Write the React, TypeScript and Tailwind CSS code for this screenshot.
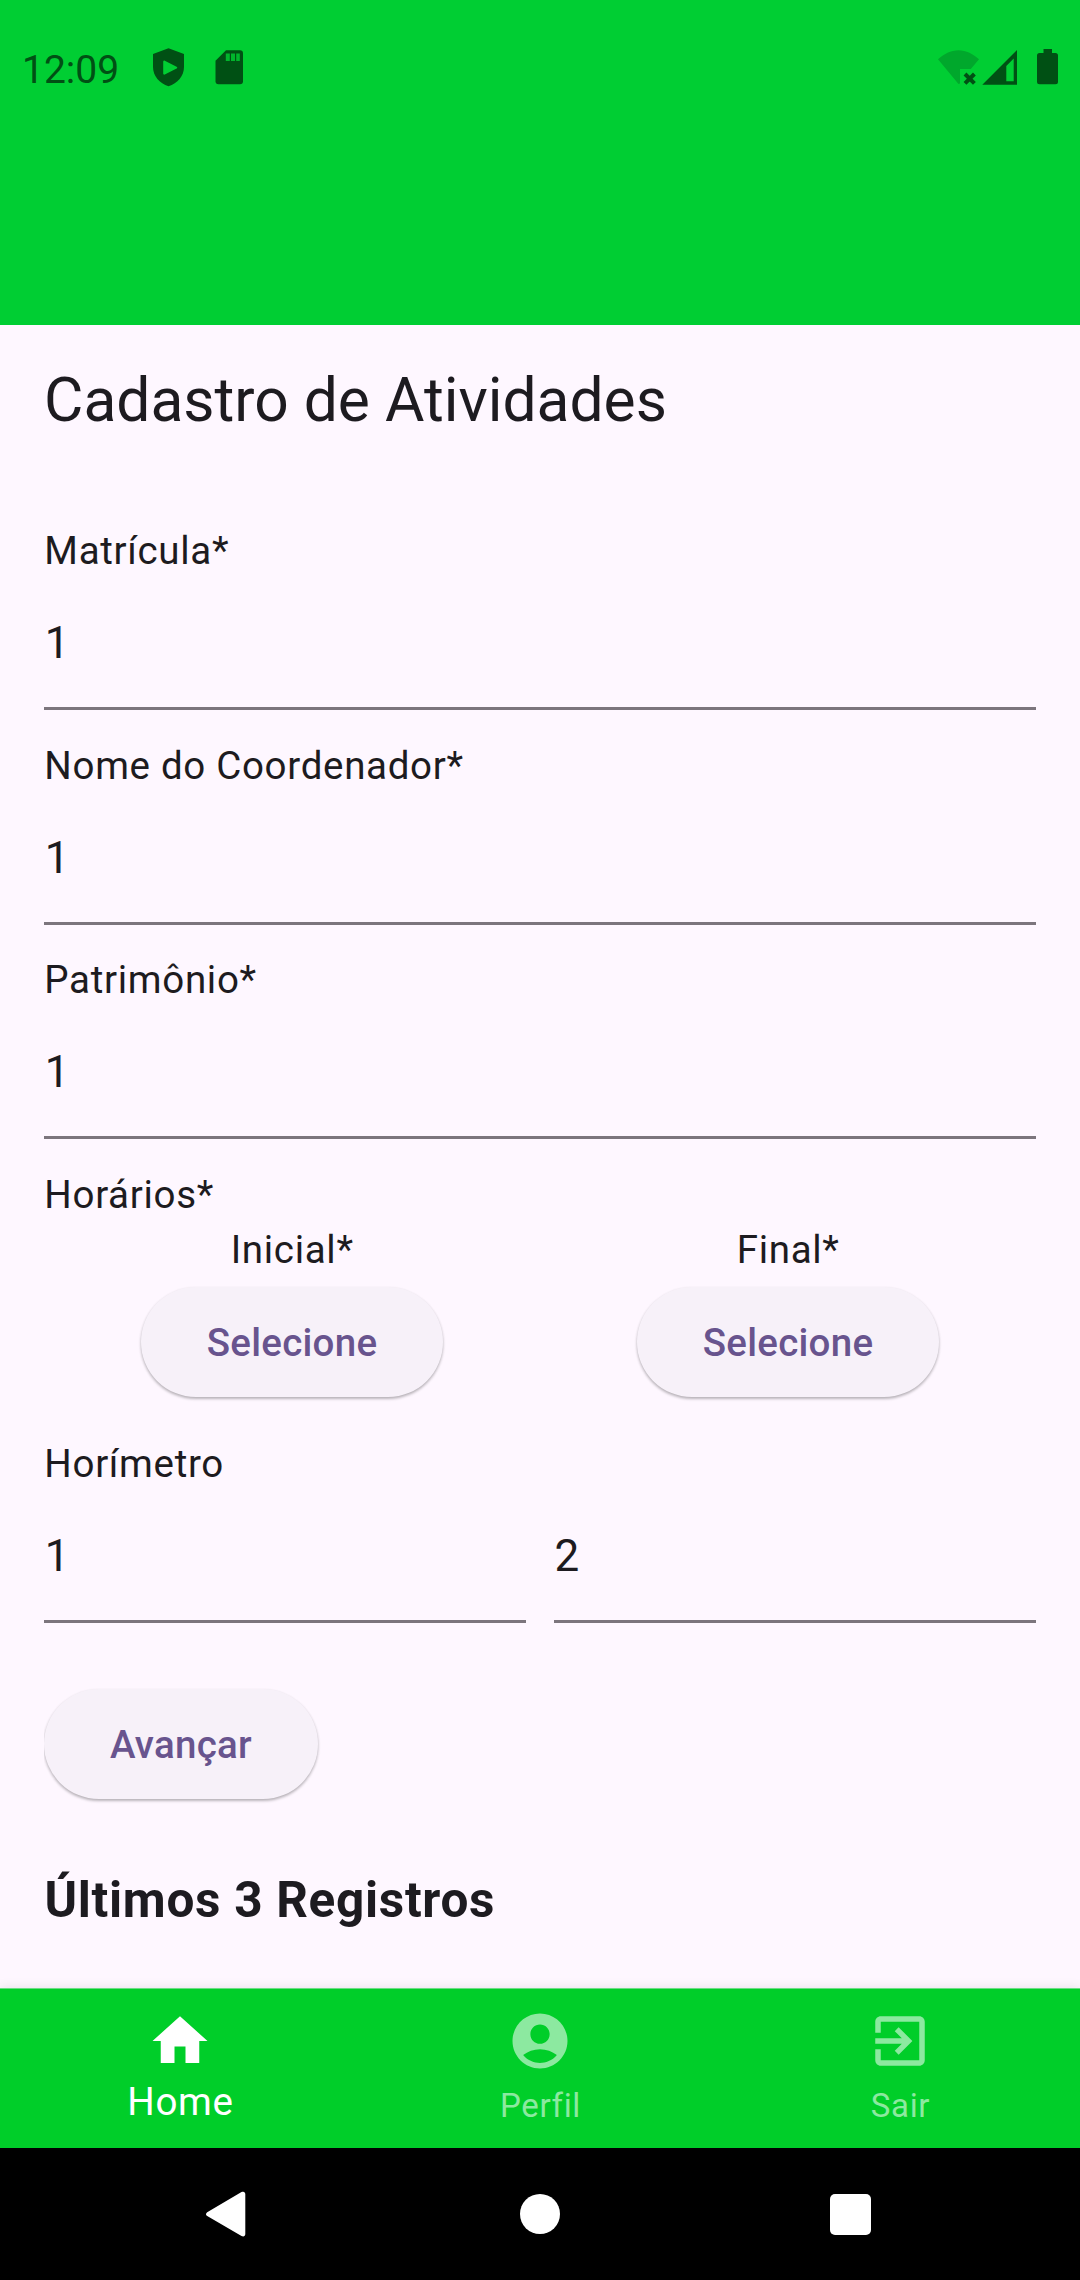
import type { ReactNode } from 'react';

const FONT = "font-['Roboto','Noto_Sans',sans-serif]";

function StatusBar() {
  return (
    <div className="flex h-[138px] items-center justify-between">
      <div className="flex items-center pl-[22px]">
        <span className="w-[127px] pt-[2px] text-[39px] leading-[45px] text-[#005014]">12:09</span>
        <svg className="-mt-0.5" width="104" height="44" viewBox="149 46 104 44" fill="#005014">
          <path
            fillRule="evenodd"
            d="M168.5 48.3 184 54v13c0 9-6.500 16.300-15.500 19.300C159.500 83.300 153 76 153 67V54ZM163.200 62v11.600c0 1 .8 1.400 1.600 1l11.800-6c.9-.5.900-1.400 0-1.900l-11.800-6c-.8-.4-1.600.2-1.600 1.300Z"
          />
          <path d="M226 50.200h14a3 3 0 0 1 3 3v28a3 3 0 0 1-3 3h-21.500a3 3 0 0 1-3-3V60.700Z" />
          <path fill="#00b52c" d="M225.800 53.500h4v7.600h-4zM231 53.500h4v7.600h-4zM236.200 53.500h3.600v7.600h-3.600z" />
        </svg>
      </div>
      <svg className="mr-[18px] -mt-0.5" width="128" height="44" viewBox="934 46 128 44" fill="#005014">
        <path
          fill="#00a82c"
          d="M938 59.300C943.500 54 951 50.200 958.500 50.200S973.500 54 979 59.300L970.800 69H960v14.500l-1.500.6Z"
        />
        <path d="m965 74 9.400 9.400m0-9.400-9.400 9.400" stroke="#005014" strokeWidth="4" />
        <path fillRule="evenodd" d="M982.300 84.700 1017 50v34.700ZM1006.300 66v15.300h7.400V58.600Z" />
        <path d="M1043.500 49h8.500v4h3.500a2.500 2.500 0 0 1 2.500 2.500v26.300a2.500 2.500 0 0 1-2.500 2.500h-16a2.500 2.500 0 0 1-2.500-2.500V55.500a2.500 2.500 0 0 1 2.500-2.500h4Z" />
      </svg>
    </div>
  );
}

function Label({ children }: { children: ReactNode }) {
  return <div className="pl-[0.35px] text-[38.5px] leading-[55px] tracking-[0.6875px]">{children}</div>;
}

function Field({ value }: { value: string }) {
  return (
    <div className="flex h-[132px] flex-1 flex-col justify-between">
      <div className="pt-[32px] pl-[0.7px] text-[44px] leading-[66px] tracking-[1.375px]">{value}</div>
      <div className="h-[3px] bg-[#7c757d]" />
    </div>
  );
}

function LabeledField({ label, value }: { label: string; value: string }) {
  return (
    <div className="flex h-[187px] flex-col">
      <Label>{label}</Label>
      <Field value={value} />
    </div>
  );
}

function Button({ children }: { children: ReactNode }) {
  return (
    <button className="mt-[10px] mb-[12px] h-[110px] rounded-full bg-[#f7f1f9] px-[66px] pt-px text-[38.5px] leading-[55px] font-medium tracking-[0.275px] text-[#68548e] shadow-[0_2px_3px_rgba(0,0,0,0.24),0_1px_3px_rgba(0,0,0,0.08)]">
      {children}
    </button>
  );
}

function TimeSlot({ label }: { label: string }) {
  return (
    <div className="flex flex-1 flex-col items-center">
      <Label>{label}</Label>
      <Button>Selecione</Button>
    </div>
  );
}

const tabs = [
  { label: 'Home', active: true, path: 'M10 20v-6h4v6h5v-8h3L12 3 2 12h3v8z' },
  {
    label: 'Perfil',
    active: false,
    path: 'M12 2C6.480 2 2 6.480 2 12s4.480 10 10 10 10-4.480 10-10S17.520 2 12 2zm0 4c1.930 0 3.500 1.570 3.500 3.500S13.930 13 12 13s-3.500-1.570-3.500-3.500S10.070 6 12 6zm0 14c-2.030 0-4.430-.82-6.140-2.880C7.550 15.800 9.680 15 12 15s4.450.8 6.140 2.120C16.430 19.180 14.030 20 12 20z',
  },
  {
    label: 'Sair',
    active: false,
    path: 'M10.090 15.590 11.500 17l5-5-5-5-1.410 1.410L12.670 11H3v2h9.670l-2.580 2.590zM19 3H5c-1.110 0-2 .9-2 2v4h2V5h14v14H5v-4H3v4c0 1.100.89 2 2 2h14c1.100 0 2-.9 2-2V5c0-1.100-.9-2-2-2z',
  },
];

function TabBar() {
  return (
    <nav className="relative flex h-[160px] border-t border-[#6bdc85] bg-[#00ce29] shadow-[0_0_11px_rgba(0,0,0,0.10)]">
      {tabs.map((tab) => (
        <div
          key={tab.label}
          className={`flex flex-1 flex-col items-center pt-[18.500px] ${tab.active ? 'text-white' : 'text-[#8ce9a0]'}`}
        >
          <svg width="66" height="66" viewBox="0 0 24 24" fill="currentColor">
            <path d={tab.path} />
          </svg>
          <span
            className={
              tab.active
                ? 'pl-px text-[38.5px] leading-[55px] tracking-[0.6875px]'
                : 'pt-[4px] pl-px text-[33px] leading-[55px] tracking-[0.6875px]'
            }
          >
            {tab.label}
          </span>
        </div>
      ))}
    </nav>
  );
}

function SystemNavigation() {
  return (
    <div className="relative flex h-[132px] items-center justify-between bg-black pr-[209px] pl-[205px]">
      <svg width="42" height="48" viewBox="0 0 42 48" fill="white">
        <path d="M2.200 22.300 36.500 2.100c2-1.100 3.800-.2 3.800 2v40c0 2.200-1.800 3.100-3.800 2L2.200 26.100c-1.600-1-1.600-2.800 0-3.800Z" />
      </svg>
      <div className="mr-[-3px] ml-[0.500px] size-[40px] rounded-full bg-white" />
      <div className="mt-px size-[41px] rounded-[5px] bg-white" />
    </div>
  );
}

export default function App() {
  return (
    <div className={`flex h-[2280px] w-[1080px] flex-col overflow-hidden bg-[#fef7ff] text-[#1d1b20] ${FONT}`}>
      <header className="h-[325px] shrink-0 bg-[#00ce33]">
        <StatusBar />
      </header>
      <main className="flex flex-1 flex-col px-[44px]">
        <h1 className="mt-[37px] h-[161px] text-[60.500px] leading-[77px]">Cadastro de Atividades</h1>
        <div className="flex flex-col gap-[27.500px]">
          <LabeledField label="Matrícula*" value="1" />
          <LabeledField label="Nome do Coordenador*" value="1" />
          <LabeledField label="Patrimônio*" value="1" />
          <section>
            <Label>Horários*</Label>
            <div className="flex">
              <TimeSlot label="Inicial*" />
              <TimeSlot label="Final*" />
            </div>
          </section>
          <section>
            <Label>Horímetro</Label>
            <div className="flex gap-[27.500px]">
              <Field value="1" />
              <Field value="2" />
            </div>
          </section>
        </div>
        <div className="mt-[56px] flex overflow-hidden">
          <Button>Avançar</Button>
        </div>
        <h2 className="mt-[54px] pl-[0.500px] text-[49.500px] leading-[71px] font-bold tracking-[0.6875px]">
          Últimos 3 Registros
        </h2>
      </main>
      <TabBar />
      <SystemNavigation />
    </div>
  );
}
